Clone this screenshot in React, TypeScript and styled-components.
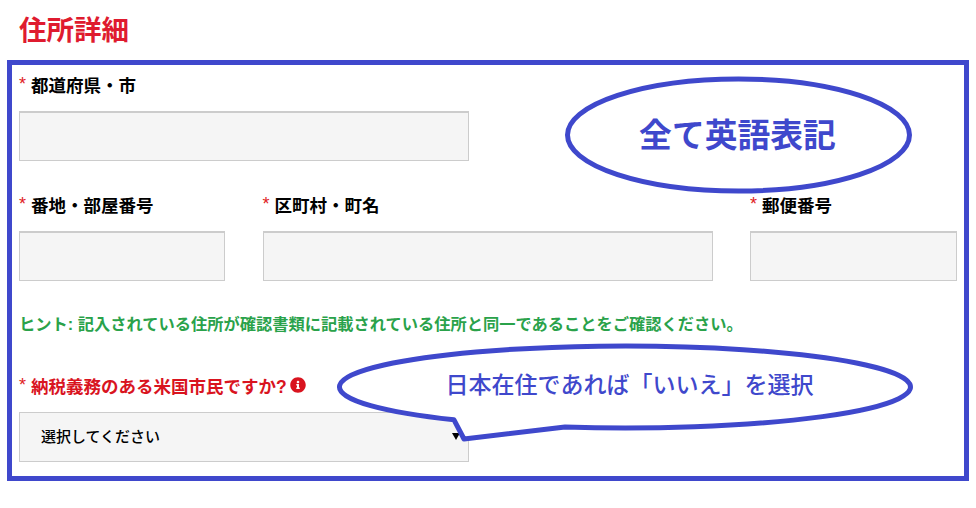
import styled, { createGlobalStyle } from "styled-components";
import { FaInfoCircle } from "react-icons/fa";

const GlobalStyle = createGlobalStyle`
  html, body {
    margin: 0;
    padding: 0;
    background: #fff;
  }
  body {
    font-family: "Liberation Sans", "Noto Sans CJK JP", sans-serif;
  }
`;

const Page = styled.div`
  width: 962px;
  margin-left: 7px;
`;

const Title = styled.h1`
  margin: 0;
  height: 60px;
  padding: 0 0 4px 12px;
  box-sizing: border-box;
  display: flex;
  align-items: center;
  font-size: 27.5px;
  font-weight: 700;
  color: #df1b2f;
`;

const Frame = styled.form`
  position: relative;
  box-sizing: border-box;
  height: 421px;
  border: 5px solid #3f48cc;
  padding: 5px 7px 14px;
`;

const Row = styled.div`
  display: grid;
  grid-template-columns: 206px 450px 207px;
  justify-content: space-between;
  margin-top: 29px;
`;

const Label = styled.label<{ $alert?: boolean }>`
  display: flex;
  align-items: center;
  height: 28px;
  margin-bottom: 13px;
  font-size: 17.5px;
  font-weight: 700;
  white-space: nowrap;
  color: ${(p) => (p.$alert ? "#d9141f" : "#000")};

  svg {
    margin-left: 3px;
    font-size: 16px;
    color: #d9141f;
  }
`;

const Star = styled.span`
  color: #e01b24;
  font-size: 18px;
  font-weight: 400;
  margin-right: 5px;
`;

const Input = styled.input<{ $wide?: boolean }>`
  display: block;
  box-sizing: border-box;
  width: ${(p) => (p.$wide ? "450px" : "100%")};
  height: 50px;
  background: #f5f5f5;
  border: 1px solid #ccc;
  border-top-width: 2px;
  margin: 0;
  padding: 0;
`;

const Hint = styled.p`
  margin: 31px 0 35px;
  line-height: 24px;
  font-size: 16.25px;
  font-weight: 700;
  color: #2aa24a;
`;

const SelectBox = styled.div`
  position: relative;
  width: 450px;

  &::after {
    content: "";
    position: absolute;
    right: 9px;
    top: 21px;
    border-left: 4px solid transparent;
    border-right: 4px solid transparent;
    border-top: 7px solid #000;
  }
`;

const Select = styled.select`
  display: block;
  box-sizing: border-box;
  width: 100%;
  height: 50px;
  appearance: none;
  background: #f5f5f5;
  border: 1px solid #ccc;
  border-radius: 0;
  padding: 0 0 2px 21px;
  font-family: inherit;
  font-size: 15px;
  font-weight: 500;
  color: #000;
`;

const Callout = styled.div<{ $left: number; $top: number; $width: number; $height: number }>`
  position: absolute;
  left: ${(p) => p.$left}px;
  top: ${(p) => p.$top}px;
  width: ${(p) => p.$width}px;
  height: ${(p) => p.$height}px;

  svg {
    display: block;
    width: 100%;
    height: 100%;
    overflow: visible;
  }
`;

const CalloutText = styled.span<{ $size: number; $top: number; $shift: number; $weight: number }>`
  position: absolute;
  left: ${(p) => p.$shift}px;
  right: 0;
  top: ${(p) => p.$top}px;
  text-align: center;
  line-height: 1.2;
  white-space: nowrap;
  font-size: ${(p) => p.$size}px;
  font-weight: ${(p) => p.$weight};
  color: #3f48cc;
`;

export default function App() {
  return (
    <Page>
      <GlobalStyle />
      <Title>住所詳細</Title>
      <Frame>
        <Label>
          <Star>*</Star>都道府県・市
        </Label>
        <Input $wide />
        <Row>
          <div>
            <Label>
              <Star>*</Star>番地・部屋番号
            </Label>
            <Input />
          </div>
          <div>
            <Label>
              <Star>*</Star>区町村・町名
            </Label>
            <Input />
          </div>
          <div>
            <Label>
              <Star>*</Star>郵便番号
            </Label>
            <Input />
          </div>
        </Row>
        <Hint>ヒント: 記入されている住所が確認書類に記載されている住所と同一であることをご確認ください。</Hint>
        <Label $alert>
          <Star>*</Star>納税義務のある米国市民ですか?
          <FaInfoCircle />
        </Label>
        <SelectBox>
          <Select defaultValue="">
            <option value="">選択してください</option>
          </Select>
        </SelectBox>

        <Callout $left={553} $top={12} $width={347} $height={116}>
          <svg viewBox="0 0 347 116">
            <ellipse cx="173.5" cy="58" rx="171" ry="56" fill="#fff" stroke="#3f48cc" strokeWidth="5" />
          </svg>
          <CalloutText $size={32.8} $top={39} $shift={-2} $weight={700}>全て英語表記</CalloutText>
        </Callout>

        <Callout $left={325} $top={281} $width={576} $height={93}>
          <svg viewBox="337 346 576 93">
            <path
              d="M454 419.83 L464 439 L565 427.08 A285.5 41 0 1 0 454 419.83 Z"
              fill="#fff"
              stroke="#3f48cc"
              strokeWidth="5"
              strokeLinejoin="round"
            />
          </svg>
          <CalloutText $size={23} $top={26} $shift={9} $weight={500}>日本在住であれば「いいえ」を選択</CalloutText>
        </Callout>
      </Frame>
    </Page>
  );
}
